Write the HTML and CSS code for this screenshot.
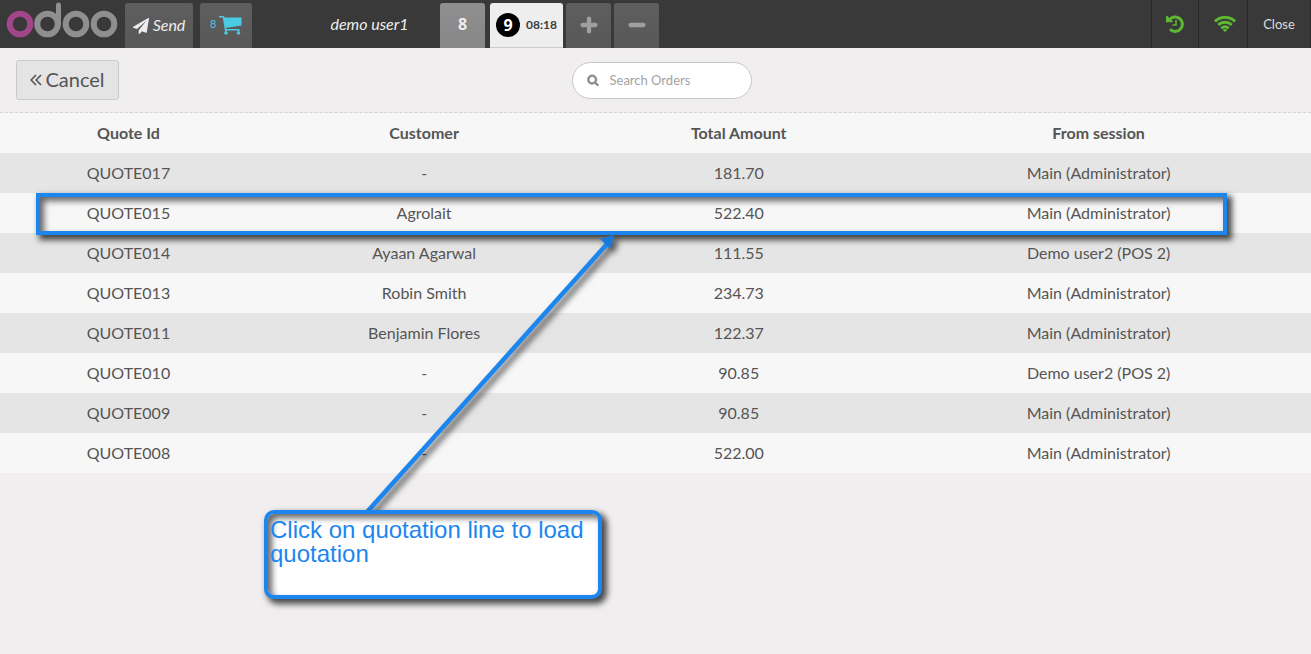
FILE: index.html
```html
<!DOCTYPE html>
<html lang="en">
<head>
<meta charset="utf-8">
<title>Odoo Point of Sale</title>
<link rel="stylesheet" href="styles.css">
</head>
<body>
<header class="topbar">
  <div class="branding">
    <svg class="logo" viewBox="0 0 112 38" role="img" aria-label="odoo">
      <g fill="none" stroke-width="6">
        <circle class="logo-first" cx="14" cy="22" r="10.300"/>
        <circle cx="41.500" cy="22" r="10.300"/>
        <circle cx="70" cy="22" r="10.300"/>
        <circle cx="98" cy="22" r="10.300"/>
        <path d="M52.500 22V3" stroke-linecap="round" stroke-width="5"/>
      </g>
    </svg>
    <button class="tile send" type="button">
      <svg class="plane" viewBox="0 0 1792 1792" aria-hidden="true"><path d="M1764 11q33 24 27 64l-256 1536q-5 29-32 45-14 8-31 8-11 0-24-5l-453-185-242 295q-18 23-49 23-13 0-22-4-19-7-30.500-23.500t-11.500-36.500v-349l864-1059-1069 925-395-162q-37-14-40-55-2-40 32-59l1664-960q15-9 32-9 20 0 36 11z"/></svg>
      <span>Send</span>
    </button>
    <button class="tile cart" type="button" aria-label="8 quotations">
      <span>8</span>
      <svg viewBox="0 0 23 19" aria-hidden="true">
        <path d="M4.500 1.500H22.500V9.500L6.500 12z" fill="currentColor"/>
        <path d="M0 0.800H4.500L6.500 13.800H20.500" fill="none" stroke="currentColor" stroke-width="1.500"/>
        <circle cx="7" cy="17" r="1.800" fill="currentColor"/><circle cx="19.500" cy="17" r="1.800" fill="currentColor"/>
        <path d="M7 14v3M19.500 14v3" stroke="currentColor" stroke-width="1.500"/>
      </svg>
    </button>
    <span class="username">demo user1</span>
  </div>
  <nav class="orders" aria-label="Orders">
    <button class="tile order" type="button">8</button>
    <button class="tile order selected" type="button"><span class="badge">9</span><span class="time">08:18</span></button>
    <button class="tile square" type="button" aria-label="New order"><svg viewBox="0 0 14 14" aria-hidden="true"><path d="M2.500 7H11.500M7 2.500V11.500"/></svg></button>
    <button class="tile square" type="button" aria-label="Delete order"><svg viewBox="0 0 14 14" aria-hidden="true"><path d="M2.500 7H11.500"/></svg></button>
  </nav>
  <div class="status">
    <button class="status-item" type="button" aria-label="Order history">
      <svg class="history" viewBox="0 0 18 18" aria-hidden="true">
        <path d="M3.200 5.200A7.200 7.200 0 1 1 4 14.200" fill="none" stroke="currentColor" stroke-width="3"/>
        <path d="M0 1L1 0.800L7 6.500L6.500 7.300H0z" fill="currentColor"/>
        <path d="M10 5V10H6.500" fill="none" stroke="currentColor" stroke-width="1.600"/>
      </svg>
    </button>
    <button class="status-item wifi-item" type="button" aria-label="Connected">
      <svg class="wifi" viewBox="0 0 22 16" aria-hidden="true">
        <g fill="none" stroke="currentColor" stroke-width="2.900">
          <path d="M1 5.400C6.500 0 15.500 0 21 5.400"/>
          <path d="M4.300 9C8 5.300 14 5.300 17.700 9"/>
          <path d="M7.400 12.400C9.400 10.200 12.600 10.200 14.600 12.400"/>
        </g>
        <path d="M11 16L8.800 13.900Q11 12.200 13.200 13.900z" fill="currentColor"/>
      </svg>
    </button>
    <button class="status-item close" type="button">Close</button>
  </div>
</header>
<main class="screen">
  <div class="toolbar">
    <button class="cancel" type="button">
      <svg viewBox="0 0 12 12" aria-hidden="true"><path d="M6 1L1.200 6L6 11M11 1L6.200 6L11 11"/></svg>
      <span>Cancel</span>
    </button>
    <label class="search">
      <svg viewBox="0 0 1792 1792" aria-hidden="true"><path d="M1216 832q0-185-131.500-316.500t-316.500-131.500-316.500 131.500-131.500 316.500 131.500 316.500 316.500 131.500 316.500-131.500 131.500-316.500zm512 832q0 52-38 90t-90 38q-54 0-90-38l-343-342q-179 124-399 124-143 0-273.500-55.500t-225-150-150-225-55.500-273.500 55.500-273.500 150-225 225-150 273.500-55.500 273.500 55.500 225 150 150 225 55.500 273.500q0 220-124 399l343 343q37 37 37 90z"/></svg>
      <input type="text" placeholder="Search Orders" aria-label="Search Orders">
    </label>
  </div>
  <table class="quotes">
    <colgroup><col class="col-id"><col class="col-customer"><col class="col-total"><col></colgroup>
    <thead>
      <tr><th>Quote Id</th><th>Customer</th><th>Total Amount</th><th>From session</th></tr>
    </thead>
    <tbody>
      <tr><td>QUOTE017</td><td>-</td><td>181.70</td><td>Main (Administrator)</td></tr>
      <tr><td>QUOTE015</td><td>Agrolait</td><td>522.40</td><td>Main (Administrator)</td></tr>
      <tr><td>QUOTE014</td><td>Ayaan Agarwal</td><td>111.55</td><td>Demo user2 (POS 2)</td></tr>
      <tr><td>QUOTE013</td><td>Robin Smith</td><td>234.73</td><td>Main (Administrator)</td></tr>
      <tr><td>QUOTE011</td><td>Benjamin Flores</td><td>122.37</td><td>Main (Administrator)</td></tr>
      <tr><td>QUOTE010</td><td>-</td><td>90.85</td><td>Demo user2 (POS 2)</td></tr>
      <tr><td>QUOTE009</td><td>-</td><td>90.85</td><td>Main (Administrator)</td></tr>
      <tr><td>QUOTE008</td><td>-</td><td>522.00</td><td>Main (Administrator)</td></tr>
    </tbody>
  </table>
  <div class="highlight"></div>
  <svg class="pointer" viewBox="0 0 260 280" aria-hidden="true">
    <path d="M7 277L247 9" fill="none" stroke="#1c86ee" stroke-width="4.500"/>
    <path d="M254 0L251 14L240 4z" fill="#1c78d8"/>
  </svg>
  <p class="callout">Click on quotation line to load quotation</p>
</main>
</body>
</html>
```

FILE: styles.css
```css
* {
  box-sizing: border-box;
}

body {
  margin: 0;
  min-height: 100vh;
  background: #f0eeee;
  color: #555;
  font-family: Lato, sans-serif;
  font-size: 16px;
}

button,
input {
  font: inherit;
  color: inherit;
}

button {
  margin: 0;
  padding: 0;
  border: 0;
  background: none;
  cursor: pointer;
}

.topbar {
  display: flex;
  height: 48px;
  background: #393939;
  color: #eee;
}

.branding {
  display: flex;
  align-items: flex-end;
  flex: 0 0 440px;
}

.logo {
  width: 112px;
  height: 38px;
  margin: 0 7px 8px 6px;
  stroke: #8f8f8f;
}

.logo-first {
  stroke: #a24689;
}

.tile {
  display: flex;
  align-items: center;
  justify-content: center;
  height: 45px;
  padding-bottom: 3px;
  border-radius: 3px 3px 0 0;
  background: linear-gradient(#5e5e5e, #585858);
}

.send {
  width: 68px;
  margin-right: 7px;
  gap: 4px;
  font-style: italic;
}

.plane {
  width: 16px;
  height: 16px;
  margin-top: 3px;
  fill: #eee;
}

.cart {
  width: 52px;
  gap: 3px;
  color: #4bcbe3;
  font: 11px "Liberation Sans", sans-serif;
}

.cart svg {
  width: 23px;
  height: 19px;
  margin-top: 3px;
}

.username {
  flex: 1;
  padding-left: 47px;
  text-align: center;
  font-style: italic;
  line-height: 48px;
}

.orders {
  display: flex;
  flex: 1;
  align-items: flex-end;
  gap: 3px;
}

.order {
  width: 45px;
  margin-right: 2px;
  background: linear-gradient(#8f8f8f, #868686);
  font-family: "Open Sans", sans-serif;
  font-weight: 700;
}

.order.selected {
  width: 73px;
  margin-right: 0;
  padding-bottom: 0;
  gap: 6px;
  border-bottom: 1px solid #ccc;
  background: #eee;
  color: #3d3d3d;
}

.badge {
  width: 24px;
  border-radius: 50%;
  background: #000;
  color: #fff;
  line-height: 24px;
}

.time {
  padding-bottom: 2px;
  font: 700 12px Lato, sans-serif;
}

.square {
  width: 45px;
  padding-bottom: 1px;
}

.square svg {
  width: 20px;
  height: 20px;
  fill: none;
  stroke: #a0a0a0;
  stroke-width: 3;
  stroke-linecap: round;
}

.status {
  display: flex;
}

.status-item {
  display: flex;
  align-items: center;
  justify-content: center;
  width: 47px;
  border-left: 1px solid #292929;
  color: #5fb832;
}

.wifi-item {
  width: 49px;
  padding-left: 4px;
}

.history {
  width: 18px;
  height: 18px;
}

.wifi {
  width: 22px;
  height: 16px;
}

.close {
  width: 64px;
  border-right: 1px solid #292929;
  color: #ddd;
  font-size: 13px;
}

.screen {
  position: relative;
}

.toolbar {
  display: grid;
  grid-template-columns: 1fr auto 1fr;
  align-items: center;
  height: 65px;
  padding: 0 4px 0 16px;
  border-bottom: 1px dashed #d3d3d3;
}

.cancel {
  display: flex;
  align-items: center;
  justify-content: center;
  justify-self: start;
  gap: 3px;
  width: 103px;
  height: 40px;
  padding-bottom: 2px;
  border: 1px solid #cacaca;
  border-radius: 3px;
  background: #e4e4e4;
  font-size: 20px;
}

.cancel svg {
  width: 12px;
  height: 12px;
  margin-top: 2px;
  fill: none;
  stroke: currentColor;
  stroke-width: 1.6;
}

.search {
  display: flex;
  align-items: center;
  gap: 11px;
  width: 180px;
  height: 37px;
  padding: 0 14px 1px;
  border: 1px solid #c8c8c8;
  border-radius: 19px;
  background: #fff;
}

.search svg {
  flex: none;
  width: 12px;
  height: 12px;
  fill: #888;
  stroke: #888;
  stroke-width: 90;
}

.search input {
  flex: 1;
  min-width: 0;
  padding: 0;
  border: 0;
  outline: 0;
  background: none;
  font-size: 13px;
}

.search input::placeholder {
  color: #a3a3a3;
}

.quotes {
  width: 100%;
  border-collapse: collapse;
  table-layout: fixed;
  text-align: center;
}

.col-id {
  width: 19.6%;
}

.col-customer {
  width: 25.5%;
}

.col-total {
  width: 22.5%;
}

.quotes tr {
  height: 40px;
  background: #f7f7f7;
}

.quotes tbody tr:nth-child(odd) {
  background: #e5e5e5;
}

.quotes th,
.quotes td {
  padding: 0 0 2px;
}

.highlight,
.callout {
  position: absolute;
  border: 4px solid #1c86ee;
  box-shadow: 4px 4px 6px 1px rgba(0, 0, 0, 0.7), inset 4px 4px 6px rgba(0, 0, 0, 0.6);
}

.highlight {
  top: 145px;
  left: 36px;
  right: 84px;
  height: 42px;
  pointer-events: none;
}

.pointer {
  position: absolute;
  top: 187px;
  left: 360px;
  width: 260px;
  height: 280px;
  overflow: visible;
  filter: drop-shadow(4px 4px 3px rgba(0, 0, 0, 0.7));
  pointer-events: none;
}

.callout {
  top: 462px;
  left: 264px;
  width: 338px;
  height: 89px;
  margin: 0;
  padding: 4px 2px;
  border-radius: 10px;
  background: #fff;
  color: #1c86ee;
  font: 24px/24px "Liberation Sans", Arial, sans-serif;
}
```
